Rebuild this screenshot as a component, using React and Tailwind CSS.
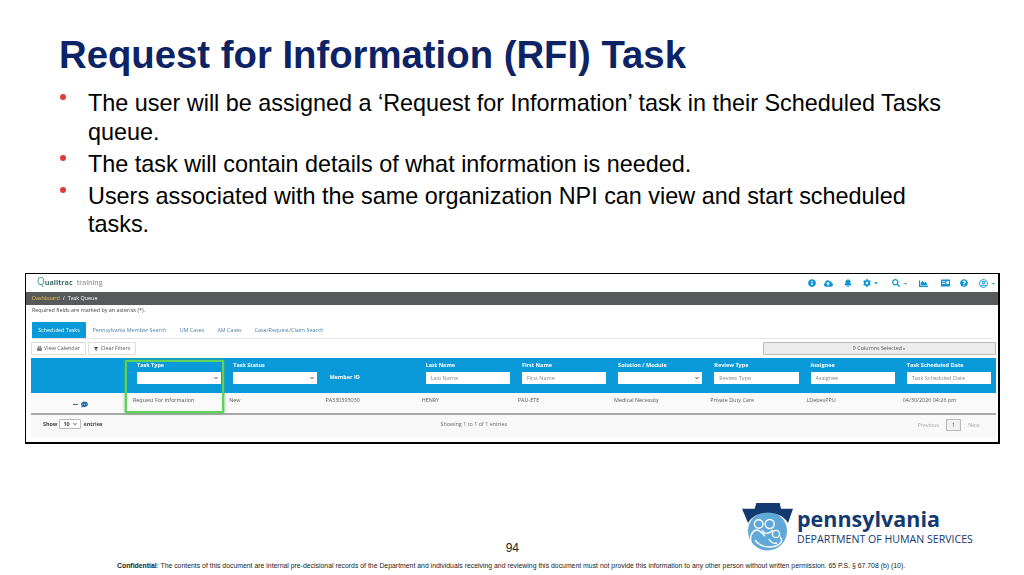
import React from "react";
import {
  FaInfoCircle,
  FaCloudUploadAlt,
  FaBell,
  FaCog,
  FaSearch,
  FaChartArea,
  FaQuestionCircle,
  FaRegUserCircle,
  FaCalendarAlt,
  FaFilter,
  FaCommentDots,
  FaCaretDown,
  FaChevronDown,
} from "react-icons/fa";

const bullets = [
  "The user will be assigned a ‘Request for Information’ task in their Scheduled Tasks queue.",
  "The task will contain details of what information is needed.",
  "Users associated with the same organization NPI can view and start scheduled tasks.",
];

const tabs = ["Pennsylvania Member Search", "UM Cases", "AM Cases", "Case/Request/Claim Search"];

const row = ["Request For Information", "New", "PA330393030", "HENRY", "PAU-ETE", "Medical Necessity", "Private Duty Care", "LDebesPPU", "04/30/2026 04:26 pm"];

const columns = [
  { label: "Task Type", kind: "select" },
  { label: "Task Status", kind: "select" },
  { label: "Member ID", kind: "none" },
  { label: "Last Name", kind: "input" },
  { label: "First Name", kind: "input" },
  { label: "Solution / Module", kind: "select" },
  { label: "Review Type", kind: "input" },
  { label: "Assignee", kind: "input" },
  { label: "Task Scheduled Date", kind: "input" },
];

const TopIcons = () => (
  <div className="flex items-center text-[#0b95d5] pr-[2.5px]">
    <FaInfoCircle className="w-[8px] h-[8px]" />
    <FaCloudUploadAlt className="w-[9px] h-[9px] ml-[8.5px]" />
    <FaBell className="w-[8px] h-[8px] ml-[10.5px]" />
    <FaCog className="w-[8px] h-[8px] ml-[11px]" />
    <FaCaretDown className="w-[6px] h-[6px] ml-[2px]" />
    <FaSearch className="w-[8px] h-[8px] ml-[13.5px]" />
    <FaCaretDown className="w-[5px] h-[5px] ml-[2.5px]" />
    <FaChartArea className="w-[9px] h-[9px] ml-[11px]" />
    <svg viewBox="0 0 10 8" className="w-[9px] h-[8px] ml-[13px]" fill="currentColor">
      <path d="M0 0h10v8H0zM1.2 2v1h3.5V2zm0 2v1h3.5V4zm4.8-2v3h2.8V2z" fillRule="evenodd" />
    </svg>
    <FaQuestionCircle className="w-[8px] h-[8px] ml-[10.5px]" />
    <FaRegUserCircle className="w-[9px] h-[9px] ml-[10.5px]" />
    <FaCaretDown className="w-[5px] h-[5px] ml-[3px]" />
  </div>
);

const ColumnHeader = ({ label, kind }) => (
  <div className="flex flex-col pl-[7px] pr-[5px] pt-[3px] min-w-0">
    {kind === "none" ? (
      <span className="mt-[8px] pt-[2px] font-bold text-white text-[5.5px] leading-[12px]">{label}</span>
    ) : (
      <span className="font-bold text-white text-[5.5px] leading-[8px]">{label}</span>
    )}
    {kind === "select" && (
      <div className="mt-[3px] h-[12px] bg-white flex items-center justify-end pr-[3px] text-[#333]">
        <FaChevronDown className="w-[4px] h-[4px]" />
      </div>
    )}
    {kind === "input" && (
      <div className="mt-[3px] h-[12px] bg-white flex items-center pl-[5px] text-[5.5px] text-[#888]">{label}</div>
    )}
  </div>
);

const QueueShot = () => (
  <div className="ml-[25px] mr-[24px] h-[171px] border border-black border-r-2 border-b-2 bg-white font-['Open_Sans',sans-serif] text-[5.4px] text-[#555] blur-[0.3px] overflow-hidden">
    <div className="h-[18px] flex items-center justify-between pl-[11px]">
      <div className="flex items-baseline -mt-[3px]">
        <span className="text-[7.2px] font-bold leading-none text-[#3f6b70]">
          <span className="text-[10px] font-normal text-[#3aa38a]">Q</span>ualitrac
        </span>
        <span className="ml-[4px] text-[6.8px] font-semibold leading-none text-[#999]">training</span>
      </div>
      <TopIcons />
    </div>
    <div className="h-[13px] bg-[#58595b] flex items-center pl-[6px] text-white">
      <span className="text-[#e3c04f]">Dashboard</span>
      <span className="mx-[3px]">/</span>
      <span>Task Queue</span>
    </div>
    <div className="h-[8px] flex items-center pl-[6px] text-[#444] mt-[1px]">Required fields are marked by an asterisk (*).</div>

    <div className="mx-[6px] mt-[8px] h-[17px] flex items-stretch border-b border-[#e6e6e6]">
      <div className="w-[54px] bg-[#0b9ad9] text-white flex items-center justify-center rounded-t-[1px]">Scheduled Tasks</div>
      {tabs.map((tab) => (
        <div key={tab} className="flex items-center px-[6.5px] text-[#4a7fa5]">{tab}</div>
      ))}
    </div>

    <div className="ml-[5px] w-[965px] mt-[3px] flex items-stretch h-[13px]">
      <div className="w-[55px] border border-[#ddd] rounded-[1px] flex items-center justify-center gap-[2px] text-[#555]">
        <FaCalendarAlt className="w-[5px] h-[5px]" />
        View Calendar
      </div>
      <div className="w-[48px] ml-[2px] border border-[#ddd] rounded-[1px] flex items-center justify-center gap-[3px] text-[#555]">
        <FaFilter className="w-[4px] h-[4px] text-[#333]" />
        Clear Filters
      </div>
      <div className="ml-auto w-[233px] border border-[#bbb] bg-[#ececec] rounded-[1px] flex items-center justify-center text-[#555]">
        9 Columns Selected
        <FaCaretDown className="w-[4px] h-[4px]" />
      </div>
    </div>

    <div className="ml-[5px] mt-[3px] w-[965px] relative">
      <div className="h-[35px] bg-[#0b9ad9] grid grid-cols-[99px_repeat(9,minmax(0,1fr))]">
        <div />
        {columns.map((col) => (
          <ColumnHeader key={col.label} label={col.label} kind={col.kind} />
        ))}
      </div>
      <div className="h-[22px] bg-[#fafafa] border-b-2 border-[#a8a8a8] grid grid-cols-[99px_repeat(9,minmax(0,1fr))]">
        <div className="flex items-center justify-center gap-[3px] text-[#2a6ea8] pt-[3px]">
          <span className="w-[5px] h-[1px] bg-[#2a6ea8]" />
          <FaCommentDots className="w-[7px] h-[7px]" />
        </div>
        {row.map((value) => (
          <div key={value} className="pl-[3px] pt-[3px] leading-[8px] truncate">{value}</div>
        ))}
      </div>
      <div className="h-[23px] bg-[#f8f8f8] flex items-start pt-[4px] px-[12px]">
        <span className="font-bold text-[#444] leading-[10px]">Show</span>
        <div className="mx-[2px] w-[22px] h-[10px] bg-white border border-[#bbb] rounded-[1px] flex items-center justify-between px-[3px] font-bold text-[#444]">
          10
          <FaChevronDown className="w-[4px] h-[4px]" />
        </div>
        <span className="font-bold text-[#444] leading-[10px]">entries</span>
        <span className="ml-[338px] text-[#666] leading-[10px]">Showing 1 to 1 of 1 entries</span>
        <div className="ml-auto flex items-center text-[#aaa] pr-[4px] leading-[10px]">
          Previous
          <span className="mx-[7px] w-[15px] h-[12px] border border-[#bbb] bg-[#f0f0f0] flex items-center justify-center text-[#555]">1</span>
          Next
        </div>
      </div>
      {/* green highlight around the Task Type column */}
      <div className="absolute left-[94px] top-[2px] w-[99px] h-[53px] border-[2px] border-[#5dd25d] shadow-[0_0_3px_#4fb04f]" />
    </div>
  </div>
);

const PaLogo = () => (
  <div className="flex items-start">
    <svg viewBox="0 0 52 49" className="w-[52px] h-[49px] shrink-0">
      <circle cx="25.5" cy="29" r="19.5" fill="#5fa8d8" />
      <path d="M14.3 1H37.7L39 6.7H51L46 21C42 14 34 10.5 26 10.5S10 14 6 21L0 6.7H12.7Z" fill="#123a70" />
      <g fill="none" stroke="#fff" strokeWidth="1.4">
        <circle cx="16.7" cy="22" r="4.3" />
        <circle cx="27.7" cy="22" r="4.5" />
        <circle cx="34" cy="32" r="3.6" />
        <path d="M10 43C7 36 9 30 14 28C18 28 20 31 23 34" />
        <path d="M20 28C22 32 26 33 31 28" />
        <path d="M13 38C18 45 28 47 36 43C41 40 40 37 38 35" />
        <path d="M27 37C29 41 31 42 35 41" />
      </g>
    </svg>
    <div className="ml-[3px] text-[#123a70] font-['Open_Sans',sans-serif]">
      <div className="text-[21.5px] font-bold leading-[28px] mt-[3px]">pennsylvania</div>
      <div className="text-[10.6px] leading-[13px] whitespace-nowrap">DEPARTMENT OF HUMAN SERVICES</div>
    </div>
  </div>
);

export default function App() {
  return (
    <div className="w-[1024px] h-[575px] bg-white overflow-hidden flex flex-col font-['Liberation_Sans',sans-serif]">
      <h1 className="ml-[59px] mt-[33px] text-[38.3px] leading-[44px] font-bold text-[#0c2366]">
        Request for Information (RFI) Task
      </h1>
      <ul className="ml-[60px] mr-[80px] mt-[12px] flex flex-col gap-[3.5px]">
        {bullets.map((text) => (
          <li key={text} className="flex text-[23.4px] leading-[28.5px] text-black">
            <span className="w-[6px] h-[6px] mt-[5px] mr-[22px] rounded-full bg-[#e03c31] shrink-0" />
            <span>{text}</span>
          </li>
        ))}
      </ul>
      <div className="mt-[34.5px]">
        <QueueShot />
      </div>
      <div className="mt-[58px] h-[50px] flex items-start">
        <div className="w-[742px] flex justify-end pr-[223px] pt-[39px] text-[12px] leading-[14px] text-[#222]">94</div>
        <PaLogo />
      </div>
      <p className="mt-[9px] ml-[117px] text-[6.89px] leading-[10px] text-[#222] whitespace-nowrap">
        <b>Confidential</b>: The contents of this document are internal pre-decisional records of the Department and individuals receiving and reviewing this document must not provide this information to any other person without written permission. 65 P.S. § 67.708 (b) (10).
      </p>
    </div>
  );
}
